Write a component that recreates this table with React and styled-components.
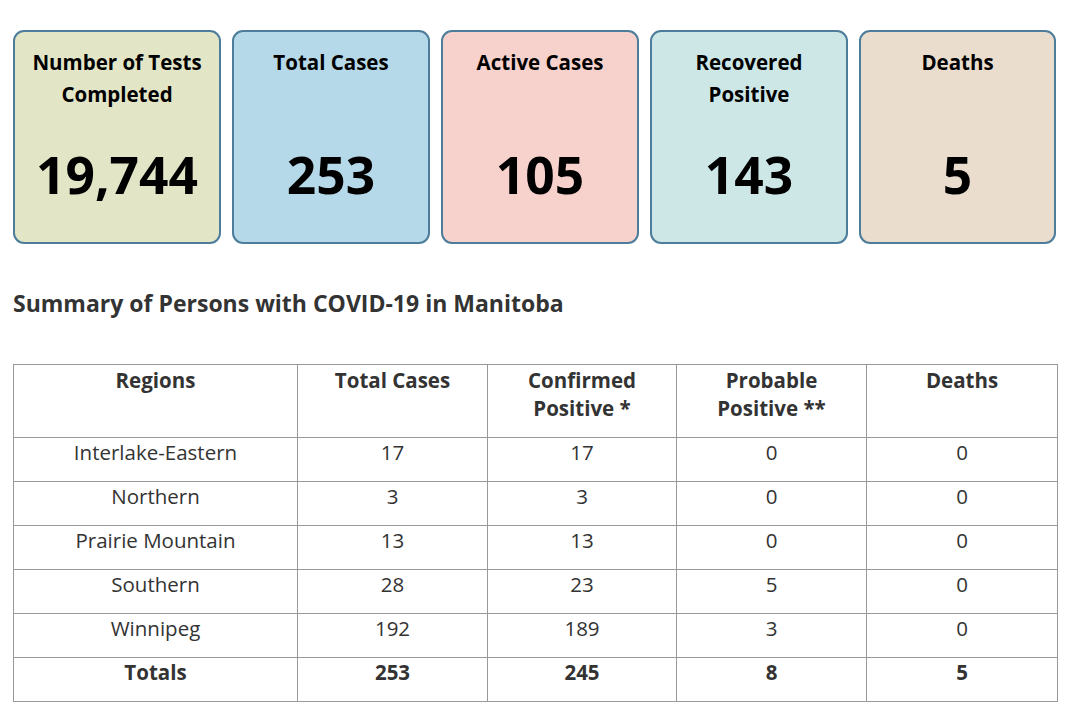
import React from 'react';
import styled, { createGlobalStyle } from 'styled-components';

const GlobalStyle = createGlobalStyle`
  body {
    margin: 0;
    background: #fff;
    font-family: "Open Sans", "Liberation Sans", sans-serif;
    color: #333;
  }
`;

const Page = styled.div`
  padding: 30px 23px 0 13px;
`;

const CardRow = styled.div`
  display: flex;
  gap: 11px;
`;

const StatCard = styled.div`
  flex: 0 0 ${(p) => p.w}px;
  box-sizing: border-box;
  height: 214px;
  background: ${(p) => p.bg};
  border: 2px solid #4d7d9b;
  border-radius: 11px;
  padding: 14px 4px 0;
  text-align: center;
  color: #000;
`;

const CardTitle = styled.div`
  font-size: 20.5px;
  font-weight: 700;
  line-height: 32px;
  height: 64px;
`;

const CardValue = styled.div`
  margin-top: 26px;
  font-size: 51.5px;
  font-weight: 700;
  line-height: 76px;
`;

const Heading = styled.h2`
  margin: 44px 0 0;
  font-size: 23px;
  font-weight: 700;
  line-height: 30px;
  color: #333;
`;

const Table = styled.table`
  margin-top: 46px;
  width: 1044px;
  border-collapse: collapse;
  border: 1px solid #555;
  font-size: 20.5px;
  line-height: 28px;
  color: #333;
  table-layout: fixed;
`;

const Th = styled.th`
  border: 1px solid #999;
  font-weight: 700;
  text-align: center;
  vertical-align: top;
  padding: 1px 6px 15px;
`;

const Td = styled.td`
  border: 1px solid #999;
  text-align: center;
  vertical-align: top;
  padding: 0 6px 15px;
  font-weight: ${(p) => (p.bold ? 700 : 400)};
`;

const cards = [
  { title: <>Number of Tests<br />Completed</>, value: '19,744', bg: '#e3e5c7', w: 208 },
  { title: 'Total Cases', value: '253', bg: '#b5d9e8', w: 198 },
  { title: 'Active Cases', value: '105', bg: '#f7d1cb', w: 198 },
  { title: <>Recovered<br />Positive</>, value: '143', bg: '#cde7e6', w: 198 },
  { title: 'Deaths', value: '5', bg: '#eaddcd', w: 197 },
];

const rows = [
  ['Interlake-Eastern', 17, 17, 0, 0],
  ['Northern', 3, 3, 0, 0],
  ['Prairie Mountain', 13, 13, 0, 0],
  ['Southern', 28, 23, 5, 0],
  ['Winnipeg', 192, 189, 3, 0],
];

export default function App() {
  return (
    <>
      <GlobalStyle />
      <Page>
        <CardRow>
          {cards.map((c, i) => (
            <StatCard key={i} bg={c.bg} w={c.w}>
              <CardTitle>{c.title}</CardTitle>
              <CardValue>{c.value}</CardValue>
            </StatCard>
          ))}
        </CardRow>

        <Heading>Summary of Persons with COVID-19 in Manitoba</Heading>

        <Table>
          <colgroup>
            <col style={{ width: 284 }} />
            <col style={{ width: 190 }} />
            <col style={{ width: 189 }} />
            <col style={{ width: 190 }} />
            <col style={{ width: 191 }} />
          </colgroup>
          <thead>
            <tr>
              <Th>Regions</Th>
              <Th>Total Cases</Th>
              <Th>Confirmed<br />Positive *</Th>
              <Th>Probable<br />Positive **</Th>
              <Th>Deaths</Th>
            </tr>
          </thead>
          <tbody>
            {rows.map((r) => (
              <tr key={r[0]}>
                {r.map((v, i) => (
                  <Td key={i}>{v}</Td>
                ))}
              </tr>
            ))}
            <tr>
              <Td bold>Totals</Td>
              <Td bold>253</Td>
              <Td bold>245</Td>
              <Td bold>8</Td>
              <Td bold>5</Td>
            </tr>
          </tbody>
        </Table>
      </Page>
    </>
  );
}
